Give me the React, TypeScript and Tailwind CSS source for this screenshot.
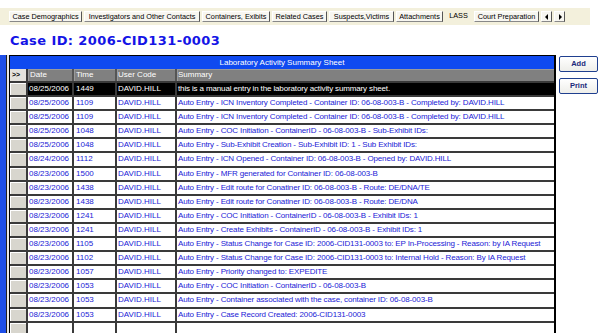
import React from "react";

type Entry = {
  date: string;
  time: string;
  user: string;
  summary: string;
};

const tabs: { label: string; width: number }[] = [
  { label: "Case Demographics", width: 73 },
  { label: "Investigators and Other Contacts", width: 116 },
  { label: "Containers, Exibits", width: 68 },
  { label: "Related Cases", width: 55 },
  { label: "Suspects,Victims", width: 65 },
  { label: "Attachments", width: 47 },
];

const entries: Entry[] = [
  { date: "08/25/2006", time: "1449", user: "DAVID.HILL", summary: "this is a manual entry in the laboratory activity summary sheet." },
  { date: "08/25/2006", time: "1109", user: "DAVID.HILL", summary: "Auto Entry - ICN Inventory Completed - Container ID: 06-08-003-B - Completed by: DAVID.HILL" },
  { date: "08/25/2006", time: "1109", user: "DAVID.HILL", summary: "Auto Entry - ICN Inventory Completed - Container ID: 06-08-003-B - Completed by: DAVID.HILL" },
  { date: "08/25/2006", time: "1048", user: "DAVID.HILL", summary: "Auto Entry - COC Initiation - ContainerID - 06-08-003-B - Sub-Exhibit IDs:" },
  { date: "08/25/2006", time: "1048", user: "DAVID.HILL", summary: "Auto Entry - Sub-Exhibit Creation - Sub-Exhibit ID: 1 - Sub Exhibit IDs:" },
  { date: "08/24/2006", time: "1112", user: "DAVID.HILL", summary: "Auto Entry - ICN Opened - Container ID: 06-08-003-B - Opened by: DAVID.HILL" },
  { date: "08/23/2006", time: "1500", user: "DAVID.HILL", summary: "Auto Entry - MFR generated for Container ID: 06-08-003-B" },
  { date: "08/23/2006", time: "1438", user: "DAVID.HILL", summary: "Auto Entry - Edit route for Conatiner ID: 06-08-003-B - Route: DE/DNA/TE" },
  { date: "08/23/2006", time: "1438", user: "DAVID.HILL", summary: "Auto Entry - Edit route for Conatiner ID: 06-08-003-B - Route: DE/DNA" },
  { date: "08/23/2006", time: "1241", user: "DAVID.HILL", summary: "Auto Entry - COC Initiation - ContainerID - 06-08-003-B - Exhibit IDs: 1" },
  { date: "08/23/2006", time: "1241", user: "DAVID.HILL", summary: "Auto Entry - Create Exhibits - ContainerID - 06-08-003-B - Exhibit IDs: 1" },
  { date: "08/23/2006", time: "1105", user: "DAVID.HILL", summary: "Auto Entry - Status Change for Case ID: 2006-CID131-0003 to: EP In-Processing - Reason: by IA Request" },
  { date: "08/23/2006", time: "1102", user: "DAVID.HILL", summary: "Auto Entry - Status Change for Case ID: 2006-CID131-0003 to: Internal Hold - Reason: By IA Request" },
  { date: "08/23/2006", time: "1057", user: "DAVID.HILL", summary: "Auto Entry - Priority changed to: EXPEDITE" },
  { date: "08/23/2006", time: "1053", user: "DAVID.HILL", summary: "Auto Entry - COC Initiation - ContainerID - 06-08-003-B" },
  { date: "08/23/2006", time: "1053", user: "DAVID.HILL", summary: "Auto Entry - Container associated with the case, container ID: 06-08-003-B" },
  { date: "08/23/2006", time: "1053", user: "DAVID.HILL", summary: "Auto Entry - Case Record Created: 2006-CID131-0003" },
];

function Tab({ label, width }: { label: string; width: number }) {
  return (
    <div
      className="h-[11px] flex items-center justify-center bg-[#f7f6f0] border-t border-l border-t-white border-l-white border-r border-b border-r-[#555] border-b-[#888] text-[7.3px] leading-none text-black whitespace-nowrap"
      style={{ width }}
    >
      {label}
    </div>
  );
}

function ArrowButton({ dir }: { dir: "left" | "right" }) {
  return (
    <div className="w-[11px] h-[11px] flex items-center justify-center bg-[#f7f6f0] border-t border-l border-t-white border-l-white border-r border-b border-r-[#555] border-b-[#888]">
      <svg width="4" height="6" viewBox="0 0 4 6">
        {dir === "left" ? <path d="M3 0 L0 3 L3 6 Z" fill="#000" /> : <path d="M1 0 L4 3 L1 6 Z" fill="#000" />}
      </svg>
    </div>
  );
}

function DataRow({ entry, selected }: { entry?: Entry; selected?: boolean }) {
  const text = selected ? "text-white" : "text-[#1a1ad6]";
  const bg = selected ? "bg-black" : "bg-white";
  return (
    <div className={`flex h-[14.1px] shrink-0 border-b-2 border-[#3a3a3a] ${bg} ${text} text-[8px] leading-[12px] whitespace-nowrap`}>
      <div className="w-[18px] shrink-0 border-r-2 border-[#3a3a3a] bg-[#d8d6ce] shadow-[inset_1px_1px_0_#fff]" />
      <div className="w-[46px] shrink-0 border-r-2 border-[#3a3a3a] pl-[1px]">{entry?.date}</div>
      <div className="w-[43px] shrink-0 border-r-2 border-[#3a3a3a] pl-[2px]">{entry?.time}</div>
      <div className="w-[60px] shrink-0 border-r-2 border-[#3a3a3a] pl-[1px]">{entry?.user}</div>
      <div className="flex-1 overflow-hidden pl-[1px] tracking-[-0.14px]">{entry?.summary}</div>
    </div>
  );
}

export default function App() {
  return (
    <div className="w-[600px] h-[333px] overflow-hidden bg-white flex flex-col font-['Liberation_Sans',Arial,sans-serif]">
      {/* Tab strip */}
      <div className="mt-[8px] h-[17px] w-[590px] bg-[#f3f0dc] flex items-center gap-[2px] pl-[9px] shrink-0">
        {tabs.map((t) => (
          <Tab key={t.label} label={t.label} width={t.width} />
        ))}
        <div className="w-[27px] h-[17px] flex items-start justify-center pt-[4px] text-[7.3px] leading-none text-black">
          LASS
        </div>
        <Tab label="Court Preparation" width={65} />
        <ArrowButton dir="left" />
        <ArrowButton dir="right" />
      </div>

      {/* Case title */}
      <div className="h-[30px] pl-[10px] pt-[8px] shrink-0 font-['DejaVu_Sans',Verdana,sans-serif] font-bold text-[13px] leading-[16px] tracking-[0.4px] text-[#1414e6]">
        Case ID: 2006-CID131-0003
      </div>

      {/* Main area */}
      <div className="flex flex-1 min-h-0">
        <div className="w-[6px] bg-[#1e4fe8] shrink-0" />
        <div className="w-[1px] bg-[#222] shrink-0" />
        <div className="w-[2px] bg-[#e8e8e8] shrink-0" />

        {/* Grid */}
        <div className="w-[547px] shrink-0 border-l border-t border-black border-r-2 flex flex-col overflow-hidden">
          <div className="h-[13px] shrink-0 bg-[#0f4af0] text-white text-[8px] leading-[13px] text-center">
            Laboratory Activity Summary Sheet
          </div>
          <div className="flex h-[14px] shrink-0 bg-[#808080] text-white text-[8px] leading-[12px] border-b-2 border-[#3a3a3a]">
            <div className="w-[18px] shrink-0 bg-[#e4e2dc] text-black font-bold text-[7px] pl-[2px] border-r-2 border-[#3a3a3a]">&gt;&gt;</div>
            <div className="w-[46px] shrink-0 border-r-2 border-[#555] pl-[2px] shadow-[inset_1px_1px_0_#9a9a9a]">Date</div>
            <div className="w-[43px] shrink-0 border-r-2 border-[#555] pl-[2px] shadow-[inset_1px_1px_0_#9a9a9a]">Time</div>
            <div className="w-[60px] shrink-0 border-r-2 border-[#555] pl-[1px] shadow-[inset_1px_1px_0_#9a9a9a]">User Code</div>
            <div className="flex-1 pl-[1px] shadow-[inset_1px_1px_0_#9a9a9a]">Summary</div>
          </div>
          {entries.map((e, i) => (
            <DataRow key={i} entry={e} selected={i === 0} />
          ))}
          <DataRow />
        </div>

        {/* Buttons */}
        <div className="flex flex-col gap-[6px] pl-[3px] pt-[1px]">
          <button className="w-[39px] h-[16px] rounded-[2px] border border-[#1f3f8f] bg-gradient-to-b from-white to-[#eeeeea] text-[#1a2a7a] text-[7.5px] font-bold leading-none">
            Add
          </button>
          <button className="w-[39px] h-[16px] rounded-[2px] border border-[#1f3f8f] bg-gradient-to-b from-white to-[#eeeeea] text-[#1a2a7a] text-[7.5px] font-bold leading-none">
            Print
          </button>
        </div>
      </div>
    </div>
  );
}
